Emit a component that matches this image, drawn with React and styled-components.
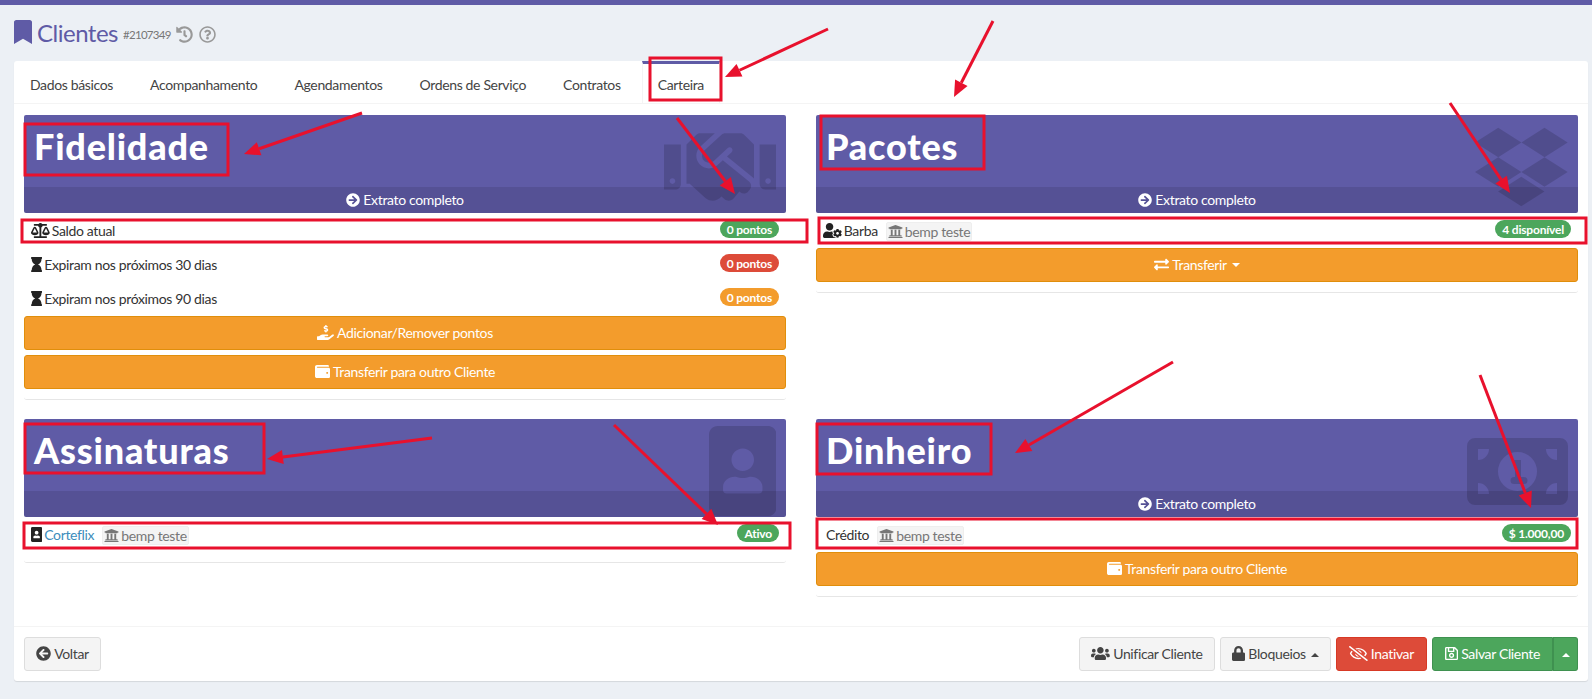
import styled, { createGlobalStyle } from 'styled-components'
import {
  FaArrowCircleLeft, FaArrowCircleRight, FaBalanceScale, FaBookmark, FaDropbox, FaExchangeAlt,
  FaHandHoldingUsd, FaHandshake, FaHistory, FaHourglass, FaLock, FaPortrait,
  FaRegEyeSlash, FaRegQuestionCircle, FaRegSave, FaUniversity, FaUserCog, FaUsers, FaWallet,
} from 'react-icons/fa'

const GlobalStyle = createGlobalStyle`
  html, body { margin: 0; padding: 0; height: 100%; overflow: hidden; }
  body { background: #ecf0f5; font-family: Lato, "Open Sans", sans-serif; font-size: 14px; color: #333; letter-spacing: -0.35px; }
  * { box-sizing: border-box; }
`

// the icons keep their font-awesome proportions, not a square box
const sized = (Icon, ratio) => styled(Icon)`
  flex: none;
  width: ${ratio}em;
  height: 1em;
`
const ScaleIcon = sized(FaBalanceScale, 1.25)
const HourglassIcon = sized(FaHourglass, 0.75)
const PortraitIcon = sized(FaPortrait, 0.75)
const UserCogIcon = sized(FaUserCog, 1.25)
const UsersIcon = sized(FaUsers, 1.25)
const HandIcon = sized(FaHandHoldingUsd, 1.125)
const LockIcon = sized(FaLock, 0.875)
const EyeSlashIcon = sized(FaRegEyeSlash, 1.25)
const SaveIcon = sized(FaRegSave, 0.875)
const HandshakeIcon = sized(FaHandshake, 1.25)
const DropboxIcon = sized(FaDropbox, 1.03)

const Page = styled.div`
  position: relative;
  height: 699px;
  overflow: hidden;
`
const TopBar = styled.div`
  height: 5px;
  background: #5f5ba6;
`
const Header = styled.header`
  height: 56px;
  padding: 15px 0 0 14px;
  display: flex;
  align-items: flex-start;
`
const Mark = styled(FaBookmark)`
  width: 18px;
  height: 24px;
  color: #5f5ba6;
`
const PageTitle = styled.h1`
  margin: 0 0 0 5px;
  font-size: 24px;
  line-height: 26px;
  font-weight: 400;
  color: #5f5ba6;
  letter-spacing: -0.5px;
`
const Code = styled.small`
  margin: 7px 0 0 5px;
  font-size: 11.5px;
  line-height: 16px;
  color: #777;
  letter-spacing: -0.7px;
`
const HeadIcons = styled.span`
  display: flex;
  gap: 6px;
  margin: 6px 0 0 5px;
  color: #999;
  font-size: 17px;
  svg { display: block; }
`
const Card = styled.main`
  margin: 0 4px 0 14px;
  height: 620px;
  background: #fff;
  border-radius: 3px;
  box-shadow: 0 1px 1px rgba(0, 0, 0, 0.1);
  display: flex;
  flex-direction: column;
`
const Tabs = styled.nav`
  height: 43px;
  display: flex;
  gap: 5px;
  border-bottom: 1px solid #f4f4f4;
`
const Tab = styled.a`
  height: 43px;
  padding: 0 15px;
  line-height: 41px;
  color: #444;
  white-space: nowrap;
  border-top: 3px solid ${(p) => (p.$active ? '#5f5ba6' : 'transparent')};
  border-left: 1px solid ${(p) => (p.$active ? '#f4f4f4' : 'transparent')};
  border-right: 1px solid ${(p) => (p.$active ? '#f4f4f4' : 'transparent')};
`
const Content = styled.section`
  flex: 1;
  padding: 11px 10px 0;
  display: grid;
  grid-template-columns: 762px 762px;
  grid-template-rows: 285px 177px;
  column-gap: 30px;
  row-gap: 19px;
`
const Wallet = styled.article`
  align-self: start;
  border-radius: 3px;
  padding-bottom: 10px;
  border-bottom: 1px solid #e6e6e6;
`
const Hero = styled.div`
  position: relative;
  height: 98px;
  background: #5f5ba6;
  border-radius: 2px;
  overflow: hidden;
  display: flex;
  flex-direction: column;
  justify-content: space-between;
  margin-bottom: 1px;
`
const HeroTitle = styled.h3`
  margin: 0;
  padding: 9px 0 0 10px;
  font-size: 36px;
  line-height: 44px;
  font-weight: 900;
  letter-spacing: 0.8px;
  color: #fff;
`
const HeroIcon = styled.span`
  position: absolute;
  top: 7px;
  right: 10px;
  height: 90px;
  font-size: 90px;
  line-height: 0;
  color: rgba(0, 0, 0, 0.15);
  svg { display: block; }
`
const BillIcon = styled.svg`
  display: block;
  width: 101px;
  height: 67px;
  margin-top: 12px;
`
const HeroFoot = styled.a`
  height: 26px;
  background: rgba(0, 0, 0, 0.1);
  display: flex;
  align-items: center;
  justify-content: center;
  gap: 3px;
  color: #fff;
  padding-bottom: 1px;
`
const Row = styled.div`
  height: 34px;
  padding: 0 7px 2px;
  display: flex;
  align-items: center;
  gap: ${(p) => p.$gap || 3}px;
`
const Label = styled.span`
  display: flex;
  align-items: center;
  gap: 2px;
  color: #333;
  svg { font-size: 15px; color: #222; }
`
const FundsLabel = styled(Label)`
  padding-left: 3px;
`
const LinkLabel = styled.a`
  color: #3c8dbc;
`
const Chip = styled.span`
  display: flex;
  align-items: center;
  gap: 2px;
  height: 19px;
  padding: 0 1px;
  margin-top: 3px;
  background: #f4f4f4;
  border: 1px solid #eee;
  border-radius: 2px;
  color: #777;
  svg { font-size: 15px; color: #777; }
`
const Badge = styled.span`
  margin-left: auto;
  margin-top: -2px;
  height: 18px;
  padding: 0 7px;
  display: flex;
  align-items: center;
  border-radius: 10px;
  background: ${(p) => p.$color};
  color: #fff;
  font-size: 12px;
  font-weight: 700;
  letter-spacing: -0.2px;
`
const WideButton = styled.button`
  display: flex;
  width: 100%;
  height: 34px;
  align-items: center;
  justify-content: center;
  gap: 3px;
  margin-bottom: 5px;
  padding: 0 0 2px;
  background: #f39c2c;
  border: 1px solid #e08e0b;
  border-radius: 3px;
  color: #fff;
  font: inherit;
  letter-spacing: inherit;
  svg { font-size: 15px; }
  &:last-child { margin-bottom: 0; }
`
const Caret = styled.i`
  display: inline-block;
  width: 0;
  height: 0;
  margin: 2px 0 0 2px;
  border-left: 4px solid transparent;
  border-right: 4px solid transparent;
  border-top: ${(p) => (p.$up ? '0' : '4px solid currentColor')};
  border-bottom: ${(p) => (p.$up ? '4px solid currentColor' : '0')};
`
const Footer = styled.footer`
  height: 55px;
  padding: 10px;
  border-top: 1px solid #f4f4f4;
  display: flex;
  justify-content: space-between;
`
const Actions = styled.div`
  display: flex;
  gap: 5px;
`
const colors = {
  default: ['#f4f4f4', '#ddd', '#444'],
  danger: ['#dd4b39', '#d73925', '#fff'],
  success: ['#4ca65c', '#3f9150', '#fff'],
}
const Action = styled.button`
  height: 34px;
  width: ${(p) => p.$w}px;
  display: flex;
  align-items: center;
  justify-content: center;
  gap: 3px;
  background: ${(p) => colors[p.$kind || 'default'][0]};
  border: 1px solid ${(p) => colors[p.$kind || 'default'][1]};
  border-radius: 3px;
  color: ${(p) => colors[p.$kind || 'default'][2]};
  font: inherit;
  letter-spacing: inherit;
  padding: 0 0 1px;
  svg { font-size: 15px; }
`
const SplitGroup = styled.div`
  display: flex;
`
const SplitMain = styled(Action)`
  border-radius: 3px 0 0 3px;
`
const SplitSide = styled(Action)`
  border-radius: 0 3px 3px 0;
  border-left: 0;
  box-shadow: inset 1px 0 0 #3f9150;
`
const Marks = styled.svg`
  position: absolute;
  left: 0;
  top: 0;
  width: 1592px;
  height: 699px;
  pointer-events: none;
`

const RED = '#e8112d'

const Arrow = ({ from, to }) => {
  const [x1, y1] = from
  const [x2, y2] = to
  const len = Math.hypot(x2 - x1, y2 - y1)
  const ux = (x2 - x1) / len
  const uy = (y2 - y1) / len
  const bx = x2 - ux * 16
  const by = y2 - uy * 16
  const head = `${x2},${y2} ${bx - uy * 7},${by + ux * 7} ${bx + uy * 7},${by - ux * 7}`
  return (
    <g>
      <line x1={x1} y1={y1} x2={bx} y2={by} stroke={RED} strokeWidth="3" />
      <polygon points={head} fill={RED} />
    </g>
  )
}

const boxes = [
  [650, 58, 71, 42],
  [25, 124, 203, 51],
  [22, 220, 785, 22],
  [821, 116, 163, 53],
  [819, 218, 767, 25],
  [25, 424, 239, 49],
  [24, 523, 766, 25],
  [817, 424, 174, 50],
  [817, 519, 760, 29],
]

const arrows = [
  [[828, 29], [725, 77]],
  [[993, 21], [954, 97]],
  [[362, 113], [244, 154]],
  [[677, 118], [735, 194]],
  [[1450, 103], [1510, 193]],
  [[432, 438], [267, 459]],
  [[614, 425], [718, 525]],
  [[1173, 362], [1015, 453]],
  [[1480, 375], [1531, 508]],
]

const Annotations = () => (
  <Marks viewBox="0 0 1592 699">
    {boxes.map(([x, y, w, h]) => (
      <rect key={`${x}-${y}`} x={x} y={y} width={w} height={h} fill="none" stroke={RED} strokeWidth="3" />
    ))}
    {arrows.map(([from, to]) => (
      <Arrow key={from.join()} from={from} to={to} />
    ))}
  </Marks>
)

const Bill = () => (
  <BillIcon viewBox="0 0 101 67" fill="currentColor">
    <path
      fillRule="evenodd"
      d="M8 0H93A8 8 0 0 1 101 8V59A8 8 0 0 1 93 67H8A8 8 0 0 1 0 59V8A8 8 0 0 1 8 0Z
         M11 11V22A11 11 0 0 0 22 11Z
         M90 11H79A11 11 0 0 0 90 22Z
         M11 45V56H22A11 11 0 0 0 11 45Z
         M90 45A11 11 0 0 0 79 56H90Z
         M50.5 14A19.5 19.5 0 1 0 50.5 53A19.5 19.5 0 1 0 50.5 14Z"
    />
    <path d="M47 22h7v17h3a3.500 3.500 0 0 1 0 7h-10a3.500 3.500 0 0 1 0-7h1v-12a3 3 0 0 1-1-5z" />
  </BillIcon>
)

const Extract = () => (
  <HeroFoot>
    <FaArrowCircleRight /> Extrato completo
  </HeroFoot>
)

const Bank = () => (
  <Chip>
    <FaUniversity /> bemp teste
  </Chip>
)

export default function App() {
  return (
    <Page>
      <GlobalStyle />
      <TopBar />
      <Header>
        <Mark />
        <PageTitle>Clientes</PageTitle>
        <Code>#2107349</Code>
        <HeadIcons>
          <FaHistory />
          <FaRegQuestionCircle />
        </HeadIcons>
      </Header>
      <Card>
        <Tabs>
          <Tab>Dados básicos</Tab>
          <Tab>Acompanhamento</Tab>
          <Tab>Agendamentos</Tab>
          <Tab>Ordens de Serviço</Tab>
          <Tab>Contratos</Tab>
          <Tab $active>Carteira</Tab>
        </Tabs>
        <Content>
          <Wallet>
            <Hero>
              <HeroTitle>Fidelidade</HeroTitle>
              <HeroIcon><HandshakeIcon /></HeroIcon>
              <Extract />
            </Hero>
            <Row>
              <Label><ScaleIcon /> Saldo atual</Label>
              <Badge $color="#4ca65c">0 pontos</Badge>
            </Row>
            <Row>
              <Label><HourglassIcon /> Expiram nos próximos 30 dias</Label>
              <Badge $color="#dd4b39">0 pontos</Badge>
            </Row>
            <Row>
              <Label><HourglassIcon /> Expiram nos próximos 90 dias</Label>
              <Badge $color="#f39c2c">0 pontos</Badge>
            </Row>
            <WideButton><HandIcon /> Adicionar/Remover pontos</WideButton>
            <WideButton><FaWallet /> Transferir para outro Cliente</WideButton>
          </Wallet>
          <Wallet>
            <Hero>
              <HeroTitle>Pacotes</HeroTitle>
              <HeroIcon><DropboxIcon /></HeroIcon>
              <Extract />
            </Hero>
            <Row $gap={8}>
              <Label><UserCogIcon /> Barba</Label>
              <Bank />
              <Badge $color="#4ca65c">4 disponível</Badge>
            </Row>
            <WideButton><FaExchangeAlt /> Transferir <Caret /></WideButton>
          </Wallet>
          <Wallet>
            <Hero>
              <HeroTitle>Assinaturas</HeroTitle>
              <HeroIcon><PortraitIcon /></HeroIcon>
              <HeroFoot />
            </Hero>
            <Row $gap={8}>
              <Label><PortraitIcon /> <LinkLabel>Corteflix</LinkLabel></Label>
              <Bank />
              <Badge $color="#4ca65c">Ativo</Badge>
            </Row>
          </Wallet>
          <Wallet>
            <Hero>
              <HeroTitle>Dinheiro</HeroTitle>
              <HeroIcon><Bill /></HeroIcon>
              <Extract />
            </Hero>
            <Row $gap={8}>
              <FundsLabel>Crédito</FundsLabel>
              <Bank />
              <Badge $color="#4ca65c">$ 1.000,00</Badge>
            </Row>
            <WideButton><FaWallet /> Transferir para outro Cliente</WideButton>
          </Wallet>
        </Content>
        <Footer>
          <Action $w={77}><FaArrowCircleLeft /> Voltar</Action>
          <Actions>
            <Action $w={136}><UsersIcon /> Unificar Cliente</Action>
            <Action $w={111}><LockIcon /> Bloqueios <Caret $up /></Action>
            <Action $w={91} $kind="danger"><EyeSlashIcon /> Inativar</Action>
            <SplitGroup>
              <SplitMain $w={121} $kind="success"><SaveIcon /> Salvar Cliente</SplitMain>
              <SplitSide $w={25} $kind="success"><Caret $up /></SplitSide>
            </SplitGroup>
          </Actions>
        </Footer>
      </Card>
      <Annotations />
    </Page>
  )
}
